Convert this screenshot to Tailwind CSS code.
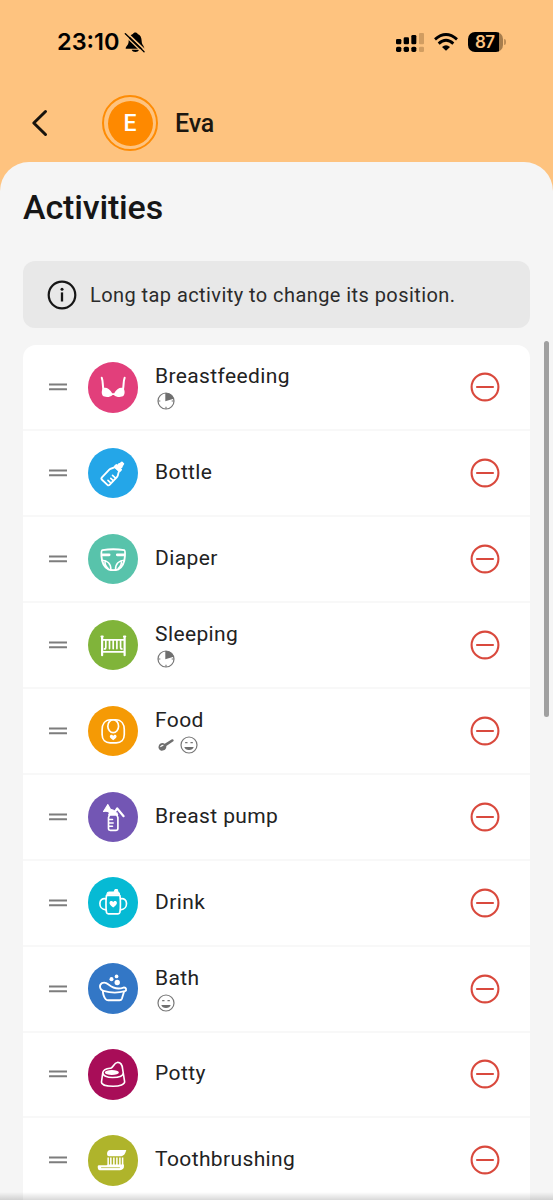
<!DOCTYPE html>
<html lang="en">
<head>
<meta charset="utf-8">
<title>Activities</title>
<script src="https://cdn.jsdelivr.net/npm/@tailwindcss/browser@4"></script>
</head>
<body class="h-[1200px] w-[553px] overflow-hidden bg-[#fec37f] font-['Roboto',sans-serif]">
<svg class="hidden">
  <defs>
    <symbol id="handle" viewBox="0 0 18 8"><path d="M0.5 1.5H17.5M0.5 6.3H17.5" stroke="#7d7d7d" stroke-width="2" stroke-linecap="round"/></symbol>
    <symbol id="remove" viewBox="0 0 30 30"><circle cx="15" cy="15" r="13.4" fill="none" stroke="#d9493d" stroke-width="2.1"/><path d="M7 15H23" stroke="#d9493d" stroke-width="2.1" stroke-linecap="round"/></symbol>
    <symbol id="clock" viewBox="-27 -27 54 54"><circle r="24" fill="none" stroke="#777" stroke-width="3.6"/><path d="M-2 -24V1L23 -7A24 24 0 0 0 -2 -24Z" fill="#6f6f6f"/><path d="M0 17V23M-23 0H-17M17 0H23" stroke="#777" stroke-width="3.4"/></symbol>
    <symbol id="smile" viewBox="-27 -27 54 54"><circle r="24" fill="none" stroke="#777" stroke-width="3.6"/><path d="M-14 6H14C13 12 7 15 0 15S-13 12 -14 6Z" fill="#6f6f6f"/><path d="M-10 -7H-6M6 -7H10" fill="none" stroke="#777" stroke-width="4" stroke-linecap="round"/></symbol>
    <symbol id="spoon" viewBox="-27 -27 54 54"><path d="M-22 3C-20 -5 -11 -8 -4 -4L18 -17C22 -18 25 -14 22 -11L1 3C2 12 -6 18 -14 17C-21 15 -24 9 -22 3Z" fill="#6f6f6f"/><path d="M-18 5Q-13 -3 -6 0Q-10 4 -17 7Z" fill="#fff"/></symbol>
  </defs>
</svg>

<div class="flex h-[162px] flex-col">
  <div class="flex h-[84px] items-center pl-[57px] pr-[47px]">
    <span class="w-[67px] whitespace-nowrap font-['Inter',sans-serif] text-[23.5px] font-semibold leading-6 tracking-[0px] text-black">23:10</span>
    <svg class="h-[22px] w-[22px]" viewBox="0 0 66 66" fill="#000"><path d="M5 53C5 45 14 43 14 30C14 18 21 10 27 9C29 3 39 3 41 9C49 12 53 20 53 30C53 42 61 45 61 53Z"/><path d="M23 56H45C42 65 26 65 23 56Z"/><path d="M8 5L64 58" stroke="#fec37f" stroke-width="5"/><path d="M4 8L60 62" stroke="#000" stroke-width="4.4" stroke-linecap="round"/><path d="M1 12L57 66" stroke="#fec37f" stroke-width="4"/></svg>
    <div class="ml-auto flex items-center">
      <svg class="h-5 w-7" viewBox="0 0 84 60"><g fill="#000"><rect y="21" width="16" height="16" rx="4"/><rect x="23" y="16" width="16" height="21" rx="4"/><rect x="46" y="9" width="15" height="28" rx="4"/><rect y="44" width="16" height="16" rx="5"/><rect x="23" y="44" width="16" height="16" rx="5"/><rect x="46" y="44" width="15" height="16" rx="5"/></g><g fill="#d19d61"><rect x="69" y="3" width="15" height="34" rx="3"/><rect x="69" y="44" width="15" height="16" rx="4"/></g></svg>
      <svg class="ml-[10px] h-[18px] w-6" viewBox="0 0 72 54" fill="none" stroke="#000" stroke-width="8.5"><path d="M3 19Q36 -10 69 19"/><path d="M14 32Q36 12 58 32"/><path d="M36 53L24 42Q36 32 48 42Z" fill="#000" stroke="none"/></svg>
      <div class="ml-[10px] flex h-5 w-[35px] items-center overflow-hidden rounded-[7px] bg-linear-to-r from-black from-[88%] to-[#a67d4d] to-[88%]">
        <span class="ml-[7px] font-['Inter',sans-serif] text-[17px] font-semibold leading-5 tracking-[-0.6px] text-[#fec37f]">87</span>
      </div>
      <div class="ml-px h-[6px] w-[2px] rounded-r-full bg-[#c08f58]"></div>
    </div>
  </div>
  <div class="flex h-[78px] items-center pl-[31px]">
    <svg class="h-7 w-[17px]" viewBox="0 0 17 28"><path d="M14.5 2.5L2.8 14L14.5 25.5" fill="none" stroke="#17130d" stroke-width="3" stroke-linecap="round" stroke-linejoin="round"/></svg>
    <div class="ml-[54px] flex size-[56px] items-center justify-center rounded-full border-2 border-[#fe8c05]">
      <div class="flex size-[45px] items-center justify-center rounded-full bg-[#fe8900] text-[23px] font-medium leading-none text-white">E</div>
    </div>
    <span class="ml-[17px] pt-[2px] text-[25px] font-medium leading-7 tracking-[-0.1px] text-[#1c1710]">Eva</span>
  </div>
</div>

<main class="relative h-[1038px] overflow-hidden rounded-t-[29px] bg-[#f5f5f5] px-[23px]">
  <h1 class="pt-[25px] text-[34px] font-medium leading-10 tracking-[-0.15px] text-[#161616]">Activities</h1>
  <div class="mt-[34px] flex h-[67px] items-center rounded-[12px] bg-[#e8e8e8] pl-6">
    <svg class="size-[30px]" viewBox="0 0 30 30"><circle cx="15" cy="15" r="13.3" fill="none" stroke="#161616" stroke-width="2.2"/><circle cx="15" cy="9.2" r="1.5" fill="#161616"/><path d="M15 12.4V21.5" stroke="#161616" stroke-width="2.3"/></svg>
    <span class="ml-[13px] whitespace-nowrap text-[20px] leading-6 tracking-[0.43px] text-[#2b2b2b]">Long tap activity to change its position.</span>
  </div>

  <ul class="mt-[17.4px] rounded-t-[13px] bg-white text-[21px] leading-6 tracking-[0.37px] text-[#222]">
    <li class="flex h-[85.9px] items-center border-b-2 border-[#f8f8f8] pl-[26px] pr-[30px]">
      <svg class="h-2 w-[18px]"><use href="#handle"/></svg>
      <svg class="ml-[20.7px] size-[50.4px] rounded-full bg-[#e23f7b]" viewBox="-75 -75 150 150"><g fill="#fff"><path d="M-32 5C-26 -3 -10 3 -3 18H3C10 3 26 -3 32 5C36 14 34 26 26 28C18 30 8 29 2 23H-2C-8 29 -18 30 -26 28C-34 26 -36 14 -32 5Z"/></g><path d="M-34 -28C-30 -18 -32 -8 -29 8M34 -28C30 -18 32 -8 29 8" fill="none" stroke="#fff" stroke-width="6" stroke-linecap="round"/></svg>
      <div class="ml-[17px] flex flex-col gap-1"><span>Breastfeeding</span><svg class="ml-[2px] size-[18px]"><use href="#clock"/></svg></div>
      <svg class="ml-auto size-[30px]"><use href="#remove"/></svg>
    </li>
    <li class="flex h-[85.9px] items-center border-b-2 border-[#f8f8f8] pl-[26px] pr-[30px]">
      <svg class="h-2 w-[18px]"><use href="#handle"/></svg>
      <svg class="ml-[20.7px] size-[50.4px] rounded-full bg-[#24a6e8]" viewBox="-75 -75 150 150"><g transform="rotate(43) translate(0 2)" fill="none" stroke="#fff" stroke-width="5.5" stroke-linejoin="round" stroke-linecap="round"><path d="M-9 -19H9C9 -12 16 -9 16 -2V30Q16 35 11 35H-11Q-16 35 -16 30V-2C-16 -9 -9 -12 -9 -19Z"/><path d="M15 4H3M15 14H5M15 24H3" stroke-width="5"/><path d="M-10 -20H10V-26H-10ZM-5 -28Q-7 -33 -4 -37L-3 -43H3L4 -37Q7 -33 5 -28Z" fill="#fff"/></g></svg>
      <span class="ml-[17px] pb-[2px]">Bottle</span>
      <svg class="ml-auto size-[30px]"><use href="#remove"/></svg>
    </li>
    <li class="flex h-[85.9px] items-center border-b-2 border-[#f8f8f8] pl-[26px] pr-[30px]">
      <svg class="h-2 w-[18px]"><use href="#handle"/></svg>
      <svg class="ml-[20.7px] size-[50.4px] rounded-full bg-[#58c3ab]" viewBox="-75 -75 150 150"><g fill="none" stroke="#fff" stroke-width="5.5" stroke-linejoin="round" stroke-linecap="round"><path d="M-32 -27Q0 -32 33 -27Q36 -26 35 -10C34 10 28 22 16 30Q0 35 -15 30C-28 22 -34 10 -35 -10Q-36 -26 -32 -27Z"/><path d="M-32 -13H-12M32 -13H12" stroke-width="8"/><path d="M-33 3C-18 3 -6 14 -7 31M33 3C18 3 6 14 7 31M-24 5C-26 14 -19 24 -15 28M24 5C26 14 19 24 15 28" stroke-width="4.5"/></g></svg>
      <span class="ml-[17px] pb-[2px]">Diaper</span>
      <svg class="ml-auto size-[30px]"><use href="#remove"/></svg>
    </li>
    <li class="flex h-[85.9px] items-center border-b-2 border-[#f8f8f8] pl-[26px] pr-[30px]">
      <svg class="h-2 w-[18px]"><use href="#handle"/></svg>
      <svg class="ml-[20.7px] size-[50.4px] rounded-full bg-[#80b43a]" viewBox="-75 -75 150 150"><g fill="none" stroke="#fff" stroke-width="5" stroke-linecap="round"><path d="M-33 -24V30M34 -24V30" stroke-width="6.5"/><path d="M-35 -26H-31M32 -26H36" stroke-width="6"/><path d="M-32 -16H33M-32 20H33"/><path d="M-22 -15V5Q-22 11 -26 11M-11 -15V10M0 -15V10M11 -15V10M22 -15V5Q22 11 26 11" stroke-width="5" stroke-linecap="round"/></g></svg>
      <div class="ml-[17px] flex flex-col gap-1"><span>Sleeping</span><svg class="ml-[2px] size-[18px]"><use href="#clock"/></svg></div>
      <svg class="ml-auto size-[30px]"><use href="#remove"/></svg>
    </li>
    <li class="flex h-[85.9px] items-center border-b-2 border-[#f8f8f8] pl-[26px] pr-[30px]">
      <svg class="h-2 w-[18px]"><use href="#handle"/></svg>
      <svg class="ml-[20.7px] size-[50.4px] rounded-full bg-[#f59a05]" viewBox="-75 -75 150 150"><g fill="none" stroke="#fff" stroke-width="5"><path d="M-7 -34H7C25 -34 33 -20 33 -4V10C33 26 23 35 9 35H-9C-23 35 -33 26 -33 10V-4C-33 -20 -25 -34 -7 -34Z"/><ellipse cx="0" cy="-15" rx="16" ry="19"/></g><path d="M0 27C-7 21 -11 18 -10 14C-8 9 -2 10 0 14C2 10 8 9 10 14C11 18 7 21 0 27Z" fill="#fff"/></svg>
      <div class="ml-[17px] flex flex-col gap-1"><span>Food</span><div class="ml-[2px] flex gap-[5px]"><svg class="size-[18px]"><use href="#spoon"/></svg><svg class="size-[18px]"><use href="#smile"/></svg></div></div>
      <svg class="ml-auto size-[30px]"><use href="#remove"/></svg>
    </li>
    <li class="flex h-[85.9px] items-center border-b-2 border-[#f8f8f8] pl-[26px] pr-[30px]">
      <svg class="h-2 w-[18px]"><use href="#handle"/></svg>
      <svg class="ml-[20.7px] size-[50.4px] rounded-full bg-[#7356b4]" viewBox="-75 -75 150 150"><g fill="none" stroke="#fff" stroke-width="5" stroke-linejoin="round" stroke-linecap="round"><path d="M-11 -12H11V-6L14 1V34Q14 39 9 39H-9Q-14 39 -14 34V1L-11 -6Z"/><path d="M-12 -7H12" stroke-width="6"/><path d="M-13 7H-2M-13 17H0M-13 27H-2" stroke-width="4.5"/><path d="M-16 -38L-29 -17C-22 -19 -16 -18 -11 -14H6L3 -20L-8 -24Z" fill="#fff" stroke-width="3"/><path d="M4 -14L12 -26L31 -3" stroke-width="6.5"/></g></svg>
      <span class="ml-[17px] pb-[2px]">Breast pump</span>
      <svg class="ml-auto size-[30px]"><use href="#remove"/></svg>
    </li>
    <li class="flex h-[85.9px] items-center border-b-2 border-[#f8f8f8] pl-[26px] pr-[30px]">
      <svg class="h-2 w-[18px]"><use href="#handle"/></svg>
      <svg class="ml-[20.7px] size-[50.4px] rounded-full bg-[#06bad4]" viewBox="-75 -75 150 150"><g fill="none" stroke="#fff" stroke-width="5" stroke-linejoin="round" stroke-linecap="round"><path d="M-20 -20H20C22 -10 22 20 20 30Q19 34 14 35H-14Q-19 34 -20 30C-22 20 -22 -10 -20 -20Z"/><path d="M-22 -10C-44 -15 -47 20 -22 23M22 -10C44 -15 47 20 22 23"/><path d="M-19 -22Q-18 -30 -12 -30L2 -30L6 -38H12L15 -29Q19 -29 19 -22Z" fill="#fff" stroke-width="3"/></g><path d="M0 16C-7 10 -12 6 -11 1C-9 -5 -2 -4 0 0C2 -4 9 -5 11 1C12 6 7 10 0 16Z" fill="#fff"/></svg>
      <span class="ml-[17px] pb-[2px]">Drink</span>
      <svg class="ml-auto size-[30px]"><use href="#remove"/></svg>
    </li>
    <li class="flex h-[85.9px] items-center border-b-2 border-[#f8f8f8] pl-[26px] pr-[30px]">
      <svg class="h-2 w-[18px]"><use href="#handle"/></svg>
      <svg class="ml-[20.7px] size-[50.4px] rounded-full bg-[#3377c6]" viewBox="-75 -75 150 150"><g fill="none" stroke="#fff" stroke-width="5.5" stroke-linejoin="round" stroke-linecap="round"><path d="M-34 -15C-43 -9 -40 5 -29 8C-12 13 16 14 35 9C41 6 39 -3 31 -2C12 5 -3 -2 -14 -11C-21 -17 -28 -18 -34 -15Z"/><path d="M-31 8C-30 20 -25 30 -22 33Q-20 36 -15 36H19Q24 36 26 31L32 11"/></g><g fill="#fff"><circle cx="12" cy="-17" r="8"/><circle cx="-5" cy="-27" r="6"/><circle cx="10" cy="-35" r="5.5"/></g></svg>
      <div class="ml-[17px] flex flex-col gap-1"><span>Bath</span><svg class="ml-[2px] size-[18px]"><use href="#smile"/></svg></div>
      <svg class="ml-auto size-[30px]"><use href="#remove"/></svg>
    </li>
    <li class="flex h-[85.9px] items-center border-b-2 border-[#f8f8f8] pl-[26px] pr-[30px]">
      <svg class="h-2 w-[18px]"><use href="#handle"/></svg>
      <svg class="ml-[20.7px] size-[50.4px] rounded-full bg-[#a80d58]" viewBox="-75 -75 150 150"><g fill="none" stroke="#fff" stroke-width="4.8" stroke-linejoin="round" stroke-linecap="round"><path d="M-31 -5C-28 -17 -16 -17 -7 -18C1 -20 2 -34 12 -35C24 -36 27 -26 28 -16L34 22C35 30 20 36 0 36S-35 31 -35 24L-31 -5C-31 5 -18 10 -2 10C16 10 30 5 30 -4"/></g><ellipse cx="-4" cy="-5" rx="21" ry="7.5" fill="#fff"/></svg>
      <span class="ml-[17px] pb-[2px]">Potty</span>
      <svg class="ml-auto size-[30px]"><use href="#remove"/></svg>
    </li>
    <li class="flex h-[85.9px] items-center border-b-2 border-[#f8f8f8] pl-[26px] pr-[30px]">
      <svg class="h-2 w-[18px]"><use href="#handle"/></svg>
      <svg class="ml-[20.7px] size-[50.4px] rounded-full bg-[#afb42b]" viewBox="-75 -75 150 150"><path d="M-18 -16C-19 -26 -14 -30 -7 -30H39C36 -19 32 -12 24 -12H-13Q-18 -12 -18 -16Z" fill="#fff"/><path d="M-15 -8V14M-7 -8V14M2 -8V14M11 -8V14M20 -8V14M28 -8V14" stroke="#fff" stroke-width="4.6"/><path d="M-46 17C-43 13 -20 18 -16 13H32V19C32 27 25 30 18 30H-40Q-47 29 -46 17Z" fill="#fff"/><path d="M-36 22H20" stroke="#afb42b" stroke-width="2"/></svg>
      <span class="ml-[17px] pb-[2px]">Toothbrushing</span>
      <svg class="ml-auto size-[30px]"><use href="#remove"/></svg>
    </li>
  </ul>
  <div class="absolute right-[4px] top-[179px] h-[376px] w-[5px] rounded-full bg-[#a0a0a0]"></div>
  <div class="absolute inset-x-0 bottom-0 h-2 bg-linear-to-b from-black/0 to-black/15"></div>
</main>
</body>
</html>
